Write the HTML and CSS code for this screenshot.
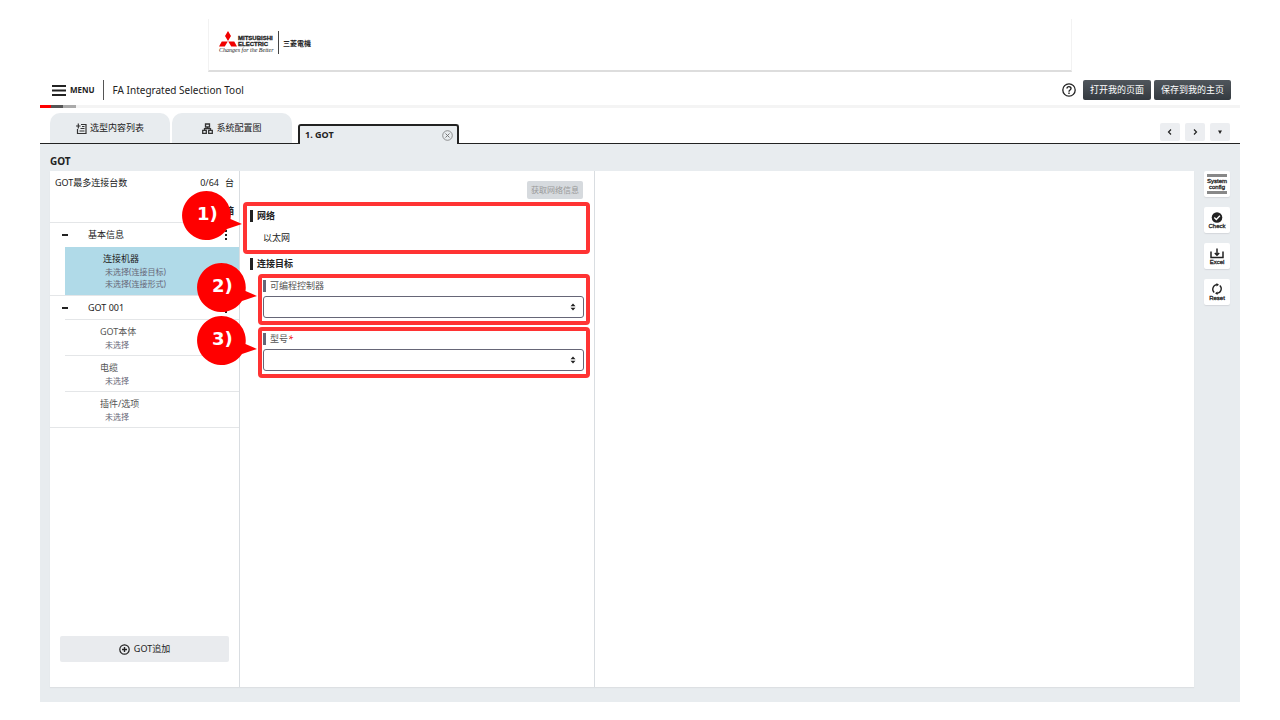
FILE: index.html
```html
<!DOCTYPE html>
<html lang="zh-CN">

<head>
  <meta charset="UTF-8">
  <meta name="viewport" content="width=device-width, initial-scale=1.0">
  <title>FA Integrated Selection Tool</title>
  <link rel="stylesheet" href="styles.css">
</head>

<body>
  <header class="brand">
    <a class="logo" href="#">
      <span class="logo-main">
        <svg class="logo-mark" viewBox="0 0 36 32" width="18" height="16">
          <path fill="#f00000" d="M18 0l6 10-6 10-6-10zM11.500 21h-6L0 31h11.500l6-10zM24.500 21h6L36 31H24.500l-6-10z" />
        </svg>
        <span class="logo-name">MITSUBISHI<br>ELECTRIC</span>
        <span class="logo-slogan">Changes for the Better</span>
      </span>
      <span class="logo-cn">三菱電機</span>
    </a>
  </header>

  <div class="appbar">
    <button class="menu" type="button">
      <svg width="14" height="11" viewBox="0 0 14 11">
        <path stroke="#222" stroke-width="2" d="M0 1h14M0 5.500h14M0 10h14" />
      </svg>
      MENU
    </button>
    <h1>FA Integrated Selection Tool</h1>
    <button class="help" type="button" aria-label="Help">
      <svg width="14" height="14" viewBox="0 0 14 14" fill="none" stroke="#222">
        <circle cx="7" cy="7" r="6.200" stroke-width="1.300" />
        <path stroke-width="1.400" d="M5 5.600C5 3 9 3 9 5.500 9 7 7 7 7 8.700M7 9.600v1.400" />
      </svg>
    </button>
    <button class="dark-btn" type="button">打开我的页面</button>
    <button class="dark-btn" type="button">保存到我的主页</button>
  </div>

  <nav class="tabs">
    <button class="tab" type="button">
      <svg width="11" height="11" viewBox="0 0 11 11" fill="none" stroke="#333">
        <path stroke-width="1.200" d="M5 1.500h5v9H1.500V6M0 3h4.500M2.300 .500v5M4.500 5.500h4M3.500 8h5M6 3.500h2.500" />
      </svg>
      选型内容列表
    </button>
    <button class="tab" type="button">
      <svg width="11" height="11" viewBox="0 0 11 11" fill="none" stroke="#333" stroke-width="1.300">
        <path d="M3.500 1h4v3h-4zM.700 7.300h3.600v3H.700zM6.700 7.300h3.600v3H6.700zM5.500 4v1.700M2.500 7.300V5.700h6v1.600" />
      </svg>
      系统配置图
    </button>
    <div class="tab-active">
      <span>1. GOT</span>
      <button type="button" aria-label="Close">
        <svg width="11" height="11" viewBox="0 0 11 11" fill="none" stroke="#777">
          <circle cx="5.500" cy="5.500" r="4.800" stroke-width=".800" />
          <path d="M3.500 3.500l4 4M7.500 3.500l-4 4" />
        </svg>
      </button>
    </div>
    <div class="pager">
      <button type="button" aria-label="Previous">
        <svg width="6" height="6" viewBox="0 0 6 6" fill="none" stroke="#222" stroke-width="1.200"><path d="M4 .500L1.500 3 4 5.500" /></svg>
      </button>
      <button type="button" aria-label="Next">
        <svg width="6" height="6" viewBox="0 0 6 6" fill="none" stroke="#222" stroke-width="1.200"><path d="M2 .500L4.500 3 2 5.500" /></svg>
      </button>
      <button type="button" aria-label="More">
        <svg width="6" height="6" viewBox="0 0 6 6"><path fill="#222" d="M1 1.500h4L3 5z" /></svg>
      </button>
    </div>
  </nav>

  <main class="workspace">
    <h2>GOT</h2>
    <div class="columns">
      <aside class="tree">
        <div class="summary">
          <p><span>GOT最多连接台数</span><span>0/64</span><span>台</span></p>
          <p><span></span><b>箱</b></p>
        </div>
        <div class="group">
          <button class="fold" type="button" aria-label="Collapse"></button>
          <span>基本信息</span>
          <button class="dots" type="button" aria-label="Options"><i></i><i></i><i></i></button>
        </div>
        <a class="node selected" href="#">
          <span>连接机器</span>
          <small>未选择(连接目标)</small>
          <small>未选择(连接形式)</small>
        </a>
        <div class="group second">
          <button class="fold" type="button" aria-label="Collapse"></button>
          <span>GOT 001</span>
          <button class="dots" type="button" aria-label="Options"><i></i><i></i><i></i></button>
        </div>
        <a class="node" href="#"><span>GOT本体</span><small>未选择</small></a>
        <a class="node" href="#"><span>电缆</span><small>未选择</small></a>
        <a class="node" href="#"><span>插件/选项</span><small>未选择</small></a>
        <div class="tree-end"></div>
        <button class="add" type="button">
          <svg width="11" height="11" viewBox="0 0 11 11" fill="none" stroke="#222">
            <circle cx="5.500" cy="5.500" r="4.700" stroke-width="1.200" />
            <path stroke-width="1.400" d="M5.500 3v5M3 5.500h5" />
          </svg>
          GOT追加
        </button>
      </aside>

      <form class="settings">
        <button class="fetch" type="button" disabled>获取网络信息</button>
        <section class="marked network">
          <h3>网络</h3>
          <p>以太网</p>
          <div class="callout">
            <svg width="60" height="49" viewBox="0 0 60 49"><path fill="#f00" d="M24.500 0a24.500 24.500 0 0 1 24 28L60 33 45 38A24.500 24.500 0 1 1 24.500 0z" /></svg>
            <span>1)</span>
          </div>
        </section>
        <h3>连接目标</h3>
        <div class="marked field">
          <label for="plc">可编程控制器</label>
          <div class="select">
            <select id="plc"><option></option></select>
            <svg width="6" height="8" viewBox="0 0 6 8"><path fill="#222" d="M3 .500L5.500 3.300h-5zM3 7.500L.500 4.700h5z" /></svg>
          </div>
          <div class="callout">
            <svg width="60" height="49" viewBox="0 0 60 49"><path fill="#f00" d="M24.500 0a24.500 24.500 0 0 1 24 28L60 33 45 38A24.500 24.500 0 1 1 24.500 0z" /></svg>
            <span>2)</span>
          </div>
        </div>
        <div class="marked field">
          <label for="model">型号<em>*</em></label>
          <div class="select">
            <select id="model"><option></option></select>
            <svg width="6" height="8" viewBox="0 0 6 8"><path fill="#222" d="M3 .500L5.500 3.300h-5zM3 7.500L.500 4.700h5z" /></svg>
          </div>
          <div class="callout">
            <svg width="60" height="49" viewBox="0 0 60 49"><path fill="#f00" d="M24.500 0a24.500 24.500 0 0 1 24 28L60 33 45 38A24.500 24.500 0 1 1 24.500 0z" /></svg>
            <span>3)</span>
          </div>
        </div>
      </form>

      <section class="preview"></section>

      <div class="tools">
        <button class="config" type="button">System<br>config</button>
        <button type="button">
          <svg width="12" height="11" viewBox="0 0 12 11">
            <circle cx="6" cy="5.500" r="5.300" fill="#222" />
            <path fill="none" stroke="#fff" stroke-width="1.300" d="M3.300 5.500l2 2 3.600-3.800" />
          </svg>
          Check
        </button>
        <button type="button">
          <svg width="14" height="11" viewBox="0 0 14 11" fill="none" stroke="#222" stroke-width="1.500">
            <path d="M1 3.500v6h12v-6M7 .500V7M4.800 5L7 7.200 9.200 5" />
          </svg>
          Excel
        </button>
        <button type="button">
          <svg width="12" height="12" viewBox="0 0 12 12">
            <path fill="none" stroke="#222" stroke-width="1.300" d="M3.200 9.500A4.500 4.500 0 0 1 6 1.700M8.800 2.500A4.500 4.500 0 0 1 6 10.300" />
            <path fill="#222" d="M5.500 0L8 1.800 5.500 3.600zM6.500 8.400L4 10.200 6.500 12z" />
          </svg>
          Reset
        </button>
      </div>
    </div>
  </main>
</body>

</html>
```
FILE: styles.css
```css
* {
  box-sizing: border-box;
}

body {
  display: flex;
  flex-direction: column;
  min-height: 100vh;
  margin: 0;
  padding: 19px 40px 18px;
  background: white;
  color: #222;
  font-family: "Noto Sans", "Noto Sans CJK SC", sans-serif;
  font-size: 9px;
  line-height: 12px;
}

h1,
h2,
h3,
p {
  margin: 0;
}

button {
  padding: 0;
  border: 0;
  background: none;
  color: inherit;
  font: inherit;
}

a {
  color: inherit;
  text-decoration: none;
}

svg {
  flex: none;
}

/* brand strip */
.brand {
  width: 72%;
  margin: 0 auto;
  padding: 12px 10px 16px;
  border: 1px solid #f2f2f2;
  border-top: 0;
  border-bottom: 2px solid #ddd;
}

.logo {
  display: flex;
  align-items: center;
  width: max-content;
}

.logo-main {
  display: grid;
  grid-template-columns: 18px 36px;
  column-gap: 1px;
  align-items: end;
  padding-right: 4px;
  border-right: 1px solid #444;
}

.logo-name {
  font: bold 6px/6px "Liberation Sans", sans-serif;
  -webkit-text-stroke: 0.3px #222;
}

.logo-slogan {
  grid-column: 1 / 3;
  font: italic 6px/7px "Liberation Serif", serif;
  white-space: nowrap;
}

.logo-cn {
  padding: 3px 0 0 4px;
  font-size: 7px;
  font-weight: bold;
}

/* title bar */
.appbar {
  display: flex;
  align-items: center;
  height: 36px;
  padding: 3px 9px 0 12px;
  border-bottom: 3px solid;
  border-image: linear-gradient(to right, #f00 12px, #555 12px 24px, #aaa 24px 37px, #f4f4f4 37px) 1;
}

.menu {
  display: flex;
  align-items: center;
  gap: 4px;
  height: 20px;
  padding-right: 8px;
  border-right: 1px solid #555;
  font-size: 8px;
  font-weight: bold;
}

.appbar h1 {
  margin-right: auto;
  padding-left: 9px;
  font-size: 10px;
  font-weight: normal;
}

.help {
  display: flex;
  margin-right: 4px;
}

.dark-btn {
  height: 20px;
  margin-left: 3px;
  padding: 0 7px;
  border-radius: 2px;
  background: linear-gradient(#50565c, #343a40);
  color: white;
}

/* tabs */
.tabs {
  display: flex;
  align-items: flex-end;
  height: 36px;
  padding: 0 10px;
  border-bottom: 1px solid #222;
}

.tab {
  display: flex;
  align-items: center;
  justify-content: center;
  gap: 3px;
  width: 120px;
  height: 30px;
  margin-right: 2px;
  border-radius: 10px 10px 0 0;
  background: #e8ecef;
}

.tab-active {
  display: flex;
  align-items: center;
  justify-content: space-between;
  width: 161px;
  height: 20px;
  margin: 0 auto -1px 4px;
  padding: 0 4px 0 5px;
  border: 2px solid #222;
  border-bottom: 0;
  border-radius: 3px 3px 0 0;
  background: #e8ecef;
  font-weight: bold;
}

.tab-active button {
  display: flex;
}

.pager {
  display: flex;
  gap: 5px;
  padding-bottom: 2px;
}

.pager button {
  display: grid;
  place-items: center;
  width: 20px;
  height: 18px;
  border-radius: 2px;
  background: #eceef1;
}

/* workspace */
.workspace {
  display: flex;
  flex: 1;
  flex-direction: column;
  padding: 10px 10px 15px;
  background: #e8ecef;
}

.workspace h2 {
  height: 17px;
  font-size: 10px;
  line-height: 14px;
}

.columns {
  display: flex;
  flex: 1;
}

.tree {
  display: flex;
  flex-direction: column;
  width: 190px;
  border-right: 1px solid #d9dde0;
  background: white;
  box-shadow: 0 1px 1px #dde0e3;
}

.summary {
  display: flex;
  flex-direction: column;
  gap: 16px;
  height: 52px;
  padding: 6px 5px 0;
  border-bottom: 1px solid #e4e6e8;
}

.summary p {
  display: flex;
  gap: 6px;
}

.summary p span:first-child {
  margin-right: auto;
}

.group {
  display: flex;
  align-items: center;
  height: 24px;
  padding: 0 12px;
}

.second {
  border-top: 1px solid #e4e6e8;
}

.group span {
  flex: 1;
}

.fold {
  width: 6px;
  height: 2px;
  margin-right: 20px;
  background: #222;
}

.dots {
  display: grid;
  gap: 2px;
}

.dots i {
  width: 2px;
  height: 2px;
  background: #222;
}

.node {
  display: flex;
  flex-direction: column;
  margin-left: 15px;
  padding: 5px 0 4px 35px;
  border-top: 1px solid #e4e6e8;
  color: #555;
}

.node span {
  line-height: 14px;
}

.node small {
  padding-left: 5px;
  color: #667;
  font-size: 8px;
}

.selected {
  padding: 5px 0 5px 38px;
  border: 0;
  background: #b0dae8;
  color: #222;
}

.selected small {
  padding-left: 2px;
}

.tree-end {
  border-top: 1px solid #e4e6e8;
}

.add {
  display: flex;
  align-items: center;
  justify-content: center;
  gap: 4px;
  height: 26px;
  margin: auto 10px 25px;
  border-radius: 2px;
  background: #e9ebee;
}

/* settings form */
.settings {
  display: flex;
  flex-direction: column;
  width: 355px;
  padding: 10px 4px 0 3px;
  border-right: 1px solid #d9dde0;
  background: white;
  box-shadow: 0 1px 1px #dde0e3;
}

.fetch {
  align-self: flex-end;
  height: 18px;
  margin: 0 7px 3px;
  padding: 0 4px;
  border-radius: 2px;
  background: #d6dade;
  color: #999;
  font-size: 8px;
}

.marked {
  position: relative;
  border: 4px solid #f33;
  border-radius: 4px;
}

.network {
  height: 52px;
  padding: 4px 3px;
}

.network p {
  padding: 10px 0 0 13px;
}

.settings h3 {
  padding-left: 4px;
  border-left: 3px solid #222;
  font-size: 9px;
}

.settings > h3 {
  margin: 4px 7px;
}

.field {
  height: 51px;
  margin: 0 0 2px 15px;
  padding: 2px 2px 0 1px;
}

.field label {
  display: block;
  margin-bottom: 4px;
  padding-left: 4px;
  border-left: 3px solid #667;
  color: #555;
}

.field em {
  color: #e00;
}

.select {
  display: flex;
  align-items: center;
}

.select select {
  width: 100%;
  height: 22px;
  border: 1px solid #667;
  border-radius: 3px;
  background: white;
  appearance: none;
}

.select svg {
  margin: 0 8px 0 -14px;
  pointer-events: none;
}

.callout {
  position: absolute;
  top: -15px;
  right: 100%;
  margin-right: 5px;
}

.callout svg {
  display: block;
}

.callout span {
  position: absolute;
  top: 13px;
  left: 15px;
  color: white;
  font: bold 18px/20px "DejaVu Sans", sans-serif;
}

.preview {
  flex: 1;
  background: white;
  box-shadow: 0 1px 1px #dde0e3;
}

/* side tools */
.tools {
  display: flex;
  flex-direction: column;
  gap: 10px;
  margin-left: 10px;
}

.tools button {
  display: flex;
  flex-direction: column;
  align-items: center;
  justify-content: center;
  width: 26px;
  height: 26px;
  border-radius: 2px;
  background: white;
  box-shadow: 0 1px 1px #d4d8db;
  font: 6px/6px "Liberation Sans", sans-serif;
  -webkit-text-stroke: 0.3px #222;
}

.tools .config::before,
.tools .config::after {
  width: 20px;
  height: 3px;
  background: #888;
  content: "";
}

.tools .config::before {
  margin-bottom: 1px;
}

.tools .config::after {
  margin-top: 1px;
}
```
